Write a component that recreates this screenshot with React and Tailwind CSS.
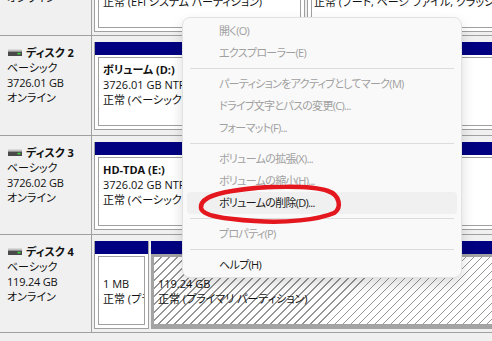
import React from "react";

function DriveIcon() {
  return (
    <svg width="14" height="8" viewBox="0 0 14 8" className="shrink-0">
      <rect x="0" y="0.5" width="14" height="2" fill="#c4c4c4" />
      <rect x="0" y="2.5" width="14" height="4.5" fill="#4a4a4a" />
      <rect x="9.5" y="3.8" width="3" height="1.6" fill="#3fd63f" />
    </svg>
  );
}

function DiskLabel({ name, size }) {
  return (
    <div className="w-[92px] shrink-0 border-r border-[#a0a0a0] pt-[9px] pl-[7px] leading-[15px]">
      <div className="flex items-center gap-[4px] font-bold">
        <span className="pl-[1px] flex items-center"><DriveIcon /></span>
        <span>{name}</span>
      </div>
      <div>ベーシック</div>
      <div className="tracking-[-0.2px]">{size}</div>
      <div>オンライン</div>
    </div>
  );
}

function Partition({ width, lines }) {
  return (
    <div className={`flex flex-col h-[88px] shrink-0 border-x border-b border-[#a0a0a0] ${width}`}>
      <div className="h-[13px] shrink-0 bg-[#000080]" />
      <div className="flex-1 bg-white pt-[2px] px-[3px] pb-[3px] min-h-0">
        <div className="h-full border border-[#a0a0a0] pt-[4px] pl-[4px] leading-[15px] whitespace-nowrap overflow-hidden">
          {lines.map((l, i) => (
            <div key={i} className={i === 0 ? "font-bold h-[15px]" : "h-[15px]"}>
              {l}
            </div>
          ))}
        </div>
      </div>
    </div>
  );
}

function MenuItem({ children, disabled, hover }) {
  return (
    <div
      className={
        "mx-[4px] h-[22px] flex items-center pl-[32px] rounded-[4px] whitespace-nowrap tracking-[-0.7px] " +
        (disabled ? "text-[#a0a0a0] " : "text-[#1a1a1a] ") +
        (hover ? "bg-[#f0f0f0]" : "")
      }
    >
      {children}
    </div>
  );
}

function Sep() {
  return <div className="my-[4px] mx-[7px] h-px bg-[#dcdcdc]" />;
}

export default function App() {
  return (
    <div className="relative w-[492px] h-[341px] overflow-hidden bg-[#f0f0f0] font-['Open_Sans','Noto_Sans_CJK_JP',sans-serif] text-[11px] text-[#111] [font-feature-settings:'palt']">
      {/* Disk 1 (partial) */}
      <div className="flex h-[35px]">
        <div className="w-[92px] shrink-0 border-r border-[#a0a0a0] pl-[7px] leading-[15px] overflow-hidden">
          <div className="-mt-[10px]">オンライン</div>
        </div>
        <div className="flex gap-[2px] pl-[2px] pb-[3px] shrink-0">
          <div className="w-[211px] h-full shrink-0 border-x border-b border-[#a0a0a0] bg-white px-[3px] pb-[3px]">
            <div className="h-full border-x border-b border-[#a0a0a0] pl-[4px] leading-[15px] whitespace-nowrap overflow-hidden">
              <div className="-mt-[6px]">正常 (EFI システム パーティション)</div>
            </div>
          </div>
          <div className="w-[320px] h-full shrink-0 border-x border-b border-[#a0a0a0] bg-white px-[3px] pb-[3px]">
            <div className="h-full border-x border-b border-[#a0a0a0] pl-[2px] leading-[15px] whitespace-nowrap overflow-hidden">
              <div className="-mt-[6px]">正常 (ブート, ページ ファイル, クラッシュ ダンプ, ベーシック データ パーティション)</div>
            </div>
          </div>
        </div>
      </div>

      {/* Disk 2 */}
      <div className="flex h-[100px] border-t border-[#a0a0a0]">
        <DiskLabel name="ディスク 2" size="3726.01 GB" />
        <div className="flex pl-[2px] pt-[6px] shrink-0">
          <Partition width="w-[420px]" lines={["ボリューム (D:)", "3726.01 GB NTFS", "正常 (ベーシック データ パーティション)"]} />
        </div>
      </div>

      {/* Disk 3 */}
      <div className="flex h-[99px] border-t border-[#a0a0a0]">
        <DiskLabel name="ディスク 3" size="3726.02 GB" />
        <div className="flex pl-[2px] pt-[6px] shrink-0">
          <Partition width="w-[420px]" lines={["HD-TDA (E:)", "3726.02 GB NTFS", "正常 (ベーシック データ パーティション)"]} />
        </div>
      </div>

      {/* Disk 4 */}
      <div className="flex h-[99px] border-y border-[#a0a0a0]">
        <DiskLabel name="ディスク 4" size="119.24 GB" />
        <div className="flex gap-[2px] pl-[2px] pt-[6px] shrink-0">
          <Partition width="w-[55px]" lines={["", "1 MB", "正常 (プライマリ パーティション)"]} />
          <div className="flex flex-col h-[88px] w-[360px] shrink-0">
            <div className="h-[13px] shrink-0 bg-[#000080]" />
            <div className="flex-1 min-h-0 border-[3px] border-b-[5px] border-[#a3a3a3] bg-[repeating-linear-gradient(135deg,#ffffff_0px,#ffffff_4.86px,#959595_4.86px,#959595_5.66px)] pt-[4px] pl-[4px] leading-[15px] whitespace-nowrap overflow-hidden">
              <div className="h-[15px]" />
              <div className="h-[15px]">119.24 GB</div>
              <div className="h-[15px]">正常 (プライマリ パーティション)</div>
            </div>
          </div>
        </div>
      </div>

      {/* Context menu */}
      <div className="absolute left-[182px] top-[17px] w-[280px] rounded-[8px] border border-[#e2e2e2] bg-[#f9f9f9] shadow-[0_6px_14px_rgba(0,0,0,0.14)] pt-[2px] pb-[1px]">
        <MenuItem disabled>開く(O)</MenuItem>
        <MenuItem disabled>エクスプローラー(E)</MenuItem>
        <Sep />
        <MenuItem disabled>パーティションをアクティブとしてマーク(M)</MenuItem>
        <MenuItem disabled>ドライブ文字とパスの変更(C)...</MenuItem>
        <MenuItem disabled>フォーマット(F)...</MenuItem>
        <Sep />
        <MenuItem disabled>ボリュームの拡張(X)...</MenuItem>
        <MenuItem disabled>ボリュームの縮小(H)...</MenuItem>
        <MenuItem hover>ボリュームの削除(D)...</MenuItem>
        <Sep />
        <MenuItem disabled>プロパティ(P)</MenuItem>
        <Sep />
        <MenuItem>ヘルプ(H)</MenuItem>
      </div>

      {/* Red hand-drawn annotation */}
      <svg className="absolute left-0 top-0 pointer-events-none" width="492" height="341" viewBox="0 0 492 341">
        <path
          d="M 232 191 C 265 186, 310 185, 328 191 C 340 195, 342 208, 334 213 C 318 220, 285 223, 255 221 C 225 219, 202 216, 201 208 C 200 200, 212 194, 232 191 C 250 188, 262 187, 275 187"
          fill="none"
          stroke="#e4161e"
          strokeWidth="4.5"
          strokeLinecap="round"
          strokeLinejoin="round"
        />
      </svg>
    </div>
  );
}
